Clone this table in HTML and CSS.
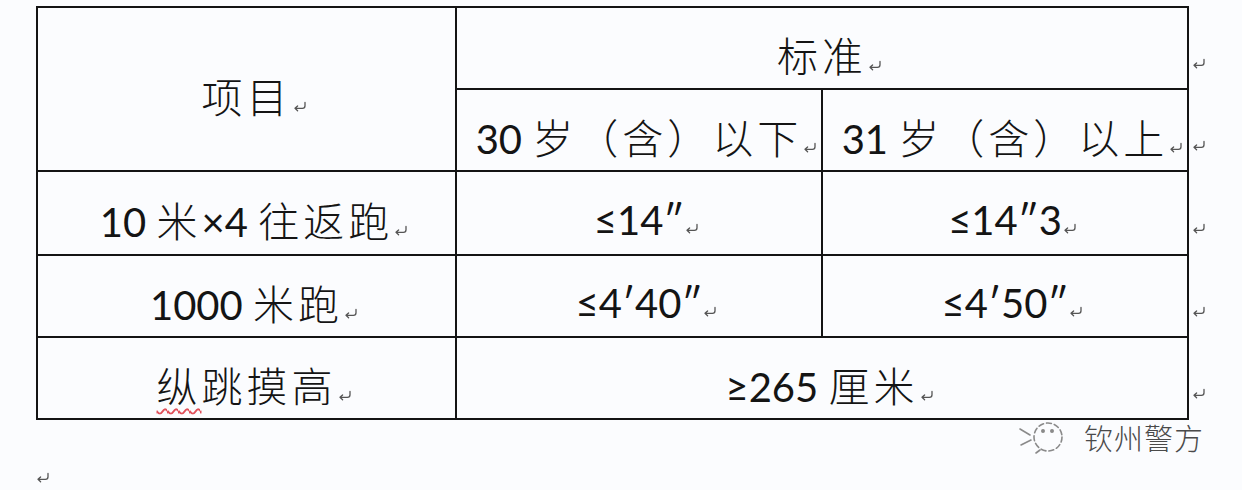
FILE: index.html
```html
<!DOCTYPE html>
<html lang="zh-CN">
<head>
<meta charset="utf-8">
<title>体能测试标准</title>
<link rel="stylesheet" href="styles.css">
</head>
<body>
<div class="page">
  <table class="std">
    <colgroup><col class="c1"><col class="c2"><col class="c3"><col class="c4"></colgroup>
    <tr class="row">
      <td rowspan="2"><span class="cj">项目</span><span class="pm"><svg viewBox="0 0 14 12"><path d="M12 1.5v3.2c0 1.6-1 2.6-2.6 2.6H2.2M4.6 4.9L2 7.3l2.6 2.4"/></svg></span></td>
      <td colspan="2"><span class="cj">标准</span><span class="pm"><svg viewBox="0 0 14 12"><path d="M12 1.5v3.2c0 1.6-1 2.6-2.6 2.6H2.2M4.6 4.9L2 7.3l2.6 2.4"/></svg></span></td>
      <td class="end"><svg viewBox="0 0 14 12"><path d="M12 1.5v3.2c0 1.6-1 2.6-2.6 2.6H2.2M4.6 4.9L2 7.3l2.6 2.4"/></svg></td>
    </tr>
    <tr class="row">
      <td>30 <span class="cj">岁（含）以下</span><span class="pm"><svg viewBox="0 0 14 12"><path d="M12 1.5v3.2c0 1.6-1 2.6-2.6 2.6H2.2M4.6 4.9L2 7.3l2.6 2.4"/></svg></span></td>
      <td>31 <span class="cj">岁（含）以上</span><span class="pm"><svg viewBox="0 0 14 12"><path d="M12 1.5v3.2c0 1.6-1 2.6-2.6 2.6H2.2M4.6 4.9L2 7.3l2.6 2.4"/></svg></span></td>
      <td class="end"><svg viewBox="0 0 14 12"><path d="M12 1.5v3.2c0 1.6-1 2.6-2.6 2.6H2.2M4.6 4.9L2 7.3l2.6 2.4"/></svg></td>
    </tr>
    <tr class="row tall">
      <td>10 <span class="cj">米</span>×4 <span class="cj">往返跑</span><span class="pm"><svg viewBox="0 0 14 12"><path d="M12 1.5v3.2c0 1.6-1 2.6-2.6 2.6H2.2M4.6 4.9L2 7.3l2.6 2.4"/></svg></span></td>
      <td>≤14″<span class="pm"><svg viewBox="0 0 14 12"><path d="M12 1.5v3.2c0 1.6-1 2.6-2.6 2.6H2.2M4.6 4.9L2 7.3l2.6 2.4"/></svg></span></td>
      <td>≤14″3<span class="pm"><svg viewBox="0 0 14 12"><path d="M12 1.5v3.2c0 1.6-1 2.6-2.6 2.6H2.2M4.6 4.9L2 7.3l2.6 2.4"/></svg></span></td>
      <td class="end"><svg viewBox="0 0 14 12"><path d="M12 1.5v3.2c0 1.6-1 2.6-2.6 2.6H2.2M4.6 4.9L2 7.3l2.6 2.4"/></svg></td>
    </tr>
    <tr class="row">
      <td>1000 <span class="cj">米跑</span><span class="pm"><svg viewBox="0 0 14 12"><path d="M12 1.5v3.2c0 1.6-1 2.6-2.6 2.6H2.2M4.6 4.9L2 7.3l2.6 2.4"/></svg></span></td>
      <td>≤4′40″<span class="pm"><svg viewBox="0 0 14 12"><path d="M12 1.5v3.2c0 1.6-1 2.6-2.6 2.6H2.2M4.6 4.9L2 7.3l2.6 2.4"/></svg></span></td>
      <td>≤4′50″<span class="pm"><svg viewBox="0 0 14 12"><path d="M12 1.5v3.2c0 1.6-1 2.6-2.6 2.6H2.2M4.6 4.9L2 7.3l2.6 2.4"/></svg></span></td>
      <td class="end"><svg viewBox="0 0 14 12"><path d="M12 1.5v3.2c0 1.6-1 2.6-2.6 2.6H2.2M4.6 4.9L2 7.3l2.6 2.4"/></svg></td>
    </tr>
    <tr class="row">
      <td><span class="cj"><span class="spell">纵</span>跳摸高</span><span class="pm"><svg viewBox="0 0 14 12"><path d="M12 1.5v3.2c0 1.6-1 2.6-2.6 2.6H2.2M4.6 4.9L2 7.3l2.6 2.4"/></svg></span></td>
      <td colspan="2">≥265 <span class="cj">厘米</span><span class="pm"><svg viewBox="0 0 14 12"><path d="M12 1.5v3.2c0 1.6-1 2.6-2.6 2.6H2.2M4.6 4.9L2 7.3l2.6 2.4"/></svg></span></td>
      <td class="end"><svg viewBox="0 0 14 12"><path d="M12 1.5v3.2c0 1.6-1 2.6-2.6 2.6H2.2M4.6 4.9L2 7.3l2.6 2.4"/></svg></td>
    </tr>
  </table>
  <div class="lastpara"><svg viewBox="0 0 14 12"><path d="M12 1.5v3.2c0 1.6-1 2.6-2.6 2.6H2.2M4.6 4.9L2 7.3l2.6 2.4"/></svg></div>
</div>
<div class="watermark">
  <svg class="wm-icon" viewBox="0 0 52 40">
    <circle cx="30" cy="20" r="14" stroke-dasharray="5 3"/>
    <circle cx="25" cy="14" r="1.2" class="dot"/>
    <circle cx="34" cy="14" r="1.2" class="dot"/>
    <path d="M2 12l10 6M3 28l10-5M18 36l4-3"/>
  </svg>
  <span class="wm-text">钦州警方</span>
</div>
</body>
</html>
```

FILE: styles.css
```css
html, body {
  margin: 0;
  background: #fbfcfe;
}

body {
  font-family: "Lato", "Noto Sans CJK SC", sans-serif;
  color: #141414;
  position: relative;
  width: 1242px;
  height: 490px;
  overflow: hidden;
}

.page {
  padding: 6px 0 0 36px;
}

.std {
  border-collapse: collapse;
  table-layout: fixed;
  width: 1181px;
}

.c1 { width: 419px; }
.c2 { width: 366px; }
.c3 { width: 366px; }
.c4 { width: 30px; }

.row { height: 82px; }
.row.tall { height: 84px; }

.std td {
  border: 2px solid #141414;
  text-align: center;
  vertical-align: middle;
  padding: 14px 0 0 0;
  font-size: 40px;
  line-height: 1;
  white-space: nowrap;
}

.std td.end {
  border: none;
  text-align: left;
  padding-left: 3px;
}

.cj {
  font-family: "Noto Sans CJK SC", sans-serif;
  font-size: 41px;
  font-weight: 300;
  letter-spacing: 4px;
}

.spell {
  text-decoration: underline wavy #e0505a;
  text-decoration-thickness: 1.5px;
  text-underline-offset: 6px;
  text-decoration-skip-ink: none;
}

.pm {
  display: inline-block;
  width: 0;
  overflow: visible;
  vertical-align: baseline;
}

svg path, svg circle {
  fill: none;
  stroke: #555;
  stroke-width: 1.3;
  stroke-linecap: round;
  stroke-linejoin: round;
}

.pm svg, .end svg, .lastpara svg {
  width: 14px;
  height: 12px;
}

.pm svg {
  margin-left: 1px;
}

.lastpara {
  margin-top: 48px;
  height: 14px;
}

.watermark {
  position: absolute;
  left: 1018px;
  top: 416px;
  display: flex;
  align-items: center;
  gap: 14px;
}

.wm-icon {
  width: 52px;
  height: 40px;
}

.wm-icon circle, .wm-icon path {
  stroke: #8a8a8a;
  stroke-width: 1.6;
}

.wm-icon .dot {
  fill: #8a8a8a;
}

.wm-text {
  font-family: "Noto Sans CJK SC", sans-serif;
  font-size: 29px;
  font-weight: 300;
  color: #4a4a4a;
  letter-spacing: 1px;
}
```
